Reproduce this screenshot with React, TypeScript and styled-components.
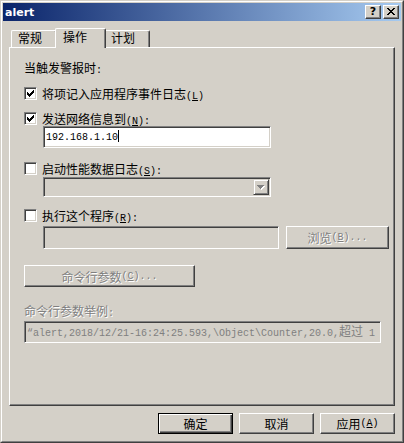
import React from "react";
import styled, { createGlobalStyle, css } from "styled-components";

const FACE = "#d4d0c8";
const SHADOW = "#808080";
const DARK = "#404040";
const HI = "#ffffff";

const GlobalStyle = createGlobalStyle`
  html, body { margin: 0; padding: 0; background: ${FACE}; }
  body { font-family: "Noto Sans CJK SC", sans-serif; font-size: 12px; }
  * { box-sizing: border-box; }
`;

const Window = styled.div`
  width: 404px;
  height: 443px;
  background: ${FACE};
  border: 1px solid;
  border-color: ${FACE} ${DARK} ${DARK} ${FACE};
  display: flex;
  flex-direction: column;
`;

const WindowInner = styled.div`
  flex: 1;
  border: 1px solid;
  border-color: ${HI} ${SHADOW} ${SHADOW} ${HI};
  padding: 1px;
  display: flex;
  flex-direction: column;
`;

const TitleBar = styled.div`
  height: 18px;
  flex: none;
  background: linear-gradient(to right, #0a246a, #a6caf0);
  display: flex;
  align-items: center;
  justify-content: space-between;
  padding: 0 2px 0 2px;
`;

const TitleText = styled.span`
  font-family: "DejaVu Sans", sans-serif;
  font-weight: bold;
  font-size: 11px;
  color: #fff;
`;

const TitleButtons = styled.div`
  display: flex;
  gap: 2px;
`;

const CaptionButton = styled.div`
  width: 16px;
  height: 14px;
  background: ${FACE};
  border: 1px solid;
  border-color: ${HI} ${DARK} ${DARK} ${HI};
  box-shadow: inset -1px -1px 0 ${SHADOW};
  display: flex;
  align-items: center;
  justify-content: center;
  font-family: "DejaVu Sans", sans-serif;
  font-weight: bold;
  font-size: 11px;
  line-height: 12px;
  color: #000;
  padding-bottom: 1px;
`;

const Body = styled.div`
  flex: 1;
  display: flex;
  flex-direction: column;
  padding: 7px 6px 6px 6px;
`;

const TabStrip = styled.div`
  height: 19px;
  flex: none;
  display: flex;
  align-items: flex-end;
  padding-left: 2px;
`;

const Tab = styled.div<{ $active?: boolean; $w: number }>`
  width: ${(p) => p.$w}px;
  height: 17px;
  background: ${FACE};
  border-top: 1px solid ${HI};
  border-left: 1px solid ${HI};
  border-right: 1px solid ${DARK};
  box-shadow: inset -1px 0 0 ${SHADOW};
  border-top-left-radius: 2px;
  border-top-right-radius: 2px;
  padding-left: 6px;
  font-size: 12px;
  line-height: 14px;
  color: #000;
  white-space: nowrap;
  ${(p) =>
    p.$active &&
    css`
      position: relative;
      z-index: 2;
      height: 20px;
      margin: 0 -2px -1px -2px;
      width: ${p.$w + 4}px;
      padding-left: 7px;
      line-height: 15px;
    `}
`;

const Panel = styled.div`
  height: 359px;
  flex: none;
  border: 1px solid;
  border-color: ${HI} ${DARK} ${DARK} ${HI};
  box-shadow: inset -1px -1px 0 ${SHADOW};
  padding: 13px 14px 0 14px;
  display: flex;
  flex-direction: column;
  align-items: flex-start;
`;

const Label = styled.div<{ $mt?: number; $disabled?: boolean }>`
  margin-top: ${(p) => p.$mt ?? 0}px;
  height: 13px;
  font-family: "Noto Sans CJK SC", sans-serif;
  font-size: 12px;
  line-height: 13px;
  white-space: nowrap;
  color: ${(p) => (p.$disabled ? SHADOW : "#000")};
  ${(p) => p.$disabled && css`text-shadow: 1px 1px 0 #fff;`}
`;

const Half = styled.span`
  font-family: "Liberation Mono", monospace;
  font-size: 10px;
`;

const Key = styled.span`
  text-decoration: underline;
`;

const CheckRow = styled.label<{ $mt: number }>`
  margin-top: ${(p) => p.$mt}px;
  height: 13px;
  display: flex;
  align-items: center;
  gap: 5px;
`;

const CheckBox = styled.span`
  width: 13px;
  height: 13px;
  flex: none;
  border: 1px solid;
  border-color: ${SHADOW} ${HI} ${HI} ${SHADOW};
  box-shadow: inset 1px 1px 0 ${DARK}, inset -1px -1px 0 ${FACE};
  background: #fff;
  padding: 2px;
  display: flex;
`;

const Field = styled.div<{ $w: number; $h: number; $mt: number; $ml?: number; $disabled?: boolean }>`
  width: ${(p) => p.$w}px;
  height: ${(p) => p.$h}px;
  margin-top: ${(p) => p.$mt}px;
  margin-left: ${(p) => p.$ml ?? 0}px;
  flex: none;
  border: 1px solid;
  border-color: ${SHADOW} ${HI} ${HI} ${SHADOW};
  box-shadow: inset 1px 1px 0 ${DARK}, inset -1px -1px 0 ${FACE};
  background: ${(p) => (p.$disabled ? FACE : "#fff")};
  padding: 0 1px 0 2px;
  display: flex;
  align-items: center;
  justify-content: space-between;
  overflow: hidden;
  font-family: "Liberation Mono", monospace;
  font-size: 10px;
  white-space: nowrap;
  color: ${(p) => (p.$disabled ? SHADOW : "#000")};
`;

const FieldText = styled.span`
  display: block;
  white-space: pre;
  line-height: 14px;
`;

const Caret = styled.span`
  display: inline-block;
  width: 1px;
  height: 12px;
  background: #000;
  vertical-align: -2px;
`;

const Cjk = styled.span`
  font-family: "Noto Sans CJK SC", sans-serif;
  font-size: 12px;
`;

const ComboButton = styled.div`
  width: 16px;
  height: 16px;
  flex: none;
  background: ${FACE};
  border: 1px solid;
  border-color: ${FACE} ${DARK} ${DARK} ${FACE};
  box-shadow: inset 1px 1px 0 ${HI}, inset -1px -1px 0 ${SHADOW};
  display: flex;
  align-items: center;
  justify-content: center;
`;

const FieldRow = styled.div<{ $mt: number; $ml: number }>`
  margin-top: ${(p) => p.$mt}px;
  margin-left: ${(p) => p.$ml}px;
  display: flex;
  gap: 7px;
`;

const Button = styled.div<{ $w: number; $h: number; $mt?: number; $default?: boolean; $disabled?: boolean }>`
  width: ${(p) => p.$w}px;
  height: ${(p) => p.$h}px;
  margin-top: ${(p) => p.$mt ?? 0}px;
  flex: none;
  background: ${FACE};
  border: 1px solid;
  border-color: ${HI} ${DARK} ${DARK} ${HI};
  box-shadow: inset -1px -1px 0 ${SHADOW};
  display: flex;
  align-items: center;
  justify-content: center;
  font-family: "Noto Sans CJK SC", sans-serif;
  font-size: 12px;
  line-height: 13px;
  white-space: nowrap;
  color: ${(p) => (p.$disabled ? SHADOW : "#000")};
  ${(p) => p.$disabled && css`text-shadow: 1px 1px 0 #fff;`}
  ${(p) =>
    p.$default &&
    css`
      border-color: #000;
      box-shadow: inset 1px 1px 0 ${HI}, inset -1px -1px 0 ${DARK}, inset -2px -2px 0 ${SHADOW};
    `}
`;

const ButtonRow = styled.div`
  margin-top: 7px;
  display: flex;
  justify-content: flex-end;
  gap: 6px;
`;

const Check = () => (
  <svg width="7" height="7" viewBox="0 0 7 7" shapeRendering="crispEdges">
    <rect x="0" y="2" width="1" height="3" fill="#000" />
    <rect x="1" y="3" width="1" height="3" fill="#000" />
    <rect x="2" y="4" width="1" height="3" fill="#000" />
    <rect x="3" y="3" width="1" height="3" fill="#000" />
    <rect x="4" y="2" width="1" height="3" fill="#000" />
    <rect x="5" y="1" width="1" height="3" fill="#000" />
    <rect x="6" y="0" width="1" height="3" fill="#000" />
  </svg>
);

const CloseGlyph = () => (
  <svg width="8" height="7" viewBox="0 0 8 7" shapeRendering="crispEdges">
    <path
      fill="#000"
      d="M0 0h2v1H0zM6 0h2v1H6zM1 1h2v1H1zM5 1h2v1H5zM2 2h4v1H2zM3 3h2v1H3zM2 4h4v1H2zM1 5h2v1H1zM5 5h2v1H5zM0 6h2v1H0zM6 6h2v1H6z"
    />
  </svg>
);

const DownArrow = () => (
  <svg width="8" height="5" viewBox="0 0 8 5" shapeRendering="crispEdges">
    <path fill="#fff" d="M1 1h7v1H1zM2 2h5v1H2zM3 3h3v1H3zM4 4h1v1H4z" />
    <path fill={SHADOW} d="M0 0h7v1H0zM1 1h5v1H1zM2 2h3v1H2zM3 3h1v1H3z" />
  </svg>
);

export default function App() {
  return (
    <>
      <GlobalStyle />
      <Window>
        <WindowInner>
          <TitleBar>
            <TitleText>alert</TitleText>
            <TitleButtons>
              <CaptionButton>?</CaptionButton>
              <CaptionButton>
                <CloseGlyph />
              </CaptionButton>
            </TitleButtons>
          </TitleBar>
          <Body>
            <TabStrip>
              <Tab $w={46}>常规</Tab>
              <Tab $w={47} $active>
                操作
              </Tab>
              <Tab $w={46}>计划</Tab>
            </TabStrip>
            <Panel>
              <Label>
                当触发警报时<Half>:</Half>
              </Label>
              <CheckRow $mt={13}>
                <CheckBox>
                  <Check />
                </CheckBox>
                <Label>
                  将项记入应用程序事件日志
                  <Half>
                    (<Key>L</Key>)
                  </Half>
                </Label>
              </CheckRow>
              <CheckRow $mt={12}>
                <CheckBox>
                  <Check />
                </CheckBox>
                <Label>
                  发送网络信息到
                  <Half>
                    (<Key>N</Key>):
                  </Half>
                </Label>
              </CheckRow>
              <Field $w={228} $h={22} $mt={1} $ml={19}>
                <FieldText>
                  192.168.1.10
                  <Caret />
                </FieldText>
              </Field>
              <CheckRow $mt={14}>
                <CheckBox />
                <Label>
                  启动性能数据日志
                  <Half>
                    (<Key>S</Key>):
                  </Half>
                </Label>
              </CheckRow>
              <Field $w={228} $h={20} $mt={2} $ml={19} $disabled>
                <span />
                <ComboButton>
                  <DownArrow />
                </ComboButton>
              </Field>
              <CheckRow $mt={12}>
                <CheckBox />
                <Label>
                  执行这个程序
                  <Half>
                    (<Key>R</Key>):
                  </Half>
                </Label>
              </CheckRow>
              <FieldRow $mt={4} $ml={19}>
                <Field $w={236} $h={23} $mt={0} $disabled />
                <Button $w={103} $h={23} $disabled>
                  浏览
                  <Half>
                    (<Key>B</Key>)...
                  </Half>
                </Button>
              </FieldRow>
              <Button $w={171} $h={22} $mt={16} $disabled>
                命令行参数
                <Half>
                  (<Key>C</Key>)...
                </Half>
              </Button>
              <Label $mt={17} $disabled>
                命令行参数举例<Half>:</Half>
              </Label>
              <Field $w={357} $h={22} $mt={4} $disabled>
                <FieldText>
                  {"“alert,2018/12/21-16:24:25.593,\\Object\\Counter,20.0,"}
                  <Cjk>超过</Cjk>
                  {" 1"}
                </FieldText>
              </Field>
            </Panel>
            <ButtonRow>
              <Button $w={75} $h={21} $default>
                确定
              </Button>
              <Button $w={75} $h={21}>
                取消
              </Button>
              <Button $w={75} $h={21}>
                应用
                <Half>
                  (<Key>A</Key>)
                </Half>
              </Button>
            </ButtonRow>
          </Body>
        </WindowInner>
      </Window>
    </>
  );
}
